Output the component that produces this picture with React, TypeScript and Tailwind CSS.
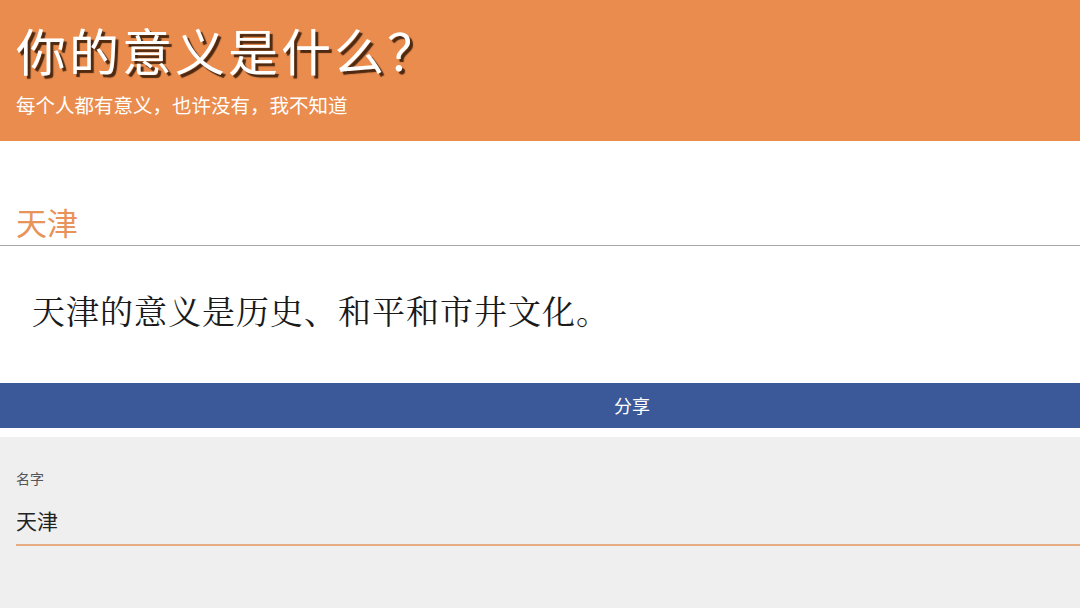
import React from 'react';

const sans = "font-['Noto_Sans_CJK_SC','Noto_Sans',sans-serif]";

export default function App() {
  return (
    <div className={`w-[1080px] h-[608px] overflow-hidden bg-white ${sans}`}>
      <header className="h-[141px] bg-[#e98c4e] px-4 pt-[19px]">
        <h1 className="text-[50px] leading-[60px] font-normal tracking-[3px] text-white [text-shadow:3px_3px_1px_rgba(60,30,10,0.9)]">
          你的意义是什么？
        </h1>
        <p className="mt-[14px] text-[19.5px] leading-[24px] text-white">
          每个人都有意义，也许没有，我不知道
        </p>
      </header>

      <section className="h-[242px] pt-[61px]">
        <h2 className="pl-4 pb-[3px] border-b border-[#a8a8a8] text-[31px] leading-[40px] text-[#e8935a]">
          天津
        </h2>
        <p className="mt-[40px] pl-8 text-[33px] leading-[48px] tracking-[1px] text-[#1a1a1a] font-['Noto_Serif_CJK_SC','Liberation_Serif','Noto_Sans_CJK_SC',serif]">
          天津的意义是历史、和平和市井文化。
        </p>
      </section>

      <button className="flex h-[45px] w-full items-center justify-center pl-[184px] bg-[#3b5998] text-[18px] text-white">
        分享
      </button>

      <div className="h-[9px] bg-white" />

      <section className="h-[171px] bg-[#efefef] pl-4 pt-[31px]">
        <label className="block text-[14px] leading-[20px] text-[#555]">名字</label>
        <div className="mt-[18px] pb-[10px] border-b-2 border-[#e6ab80] text-[21px] leading-[28px] text-[#222]">
          天津
        </div>
      </section>
    </div>
  );
}
